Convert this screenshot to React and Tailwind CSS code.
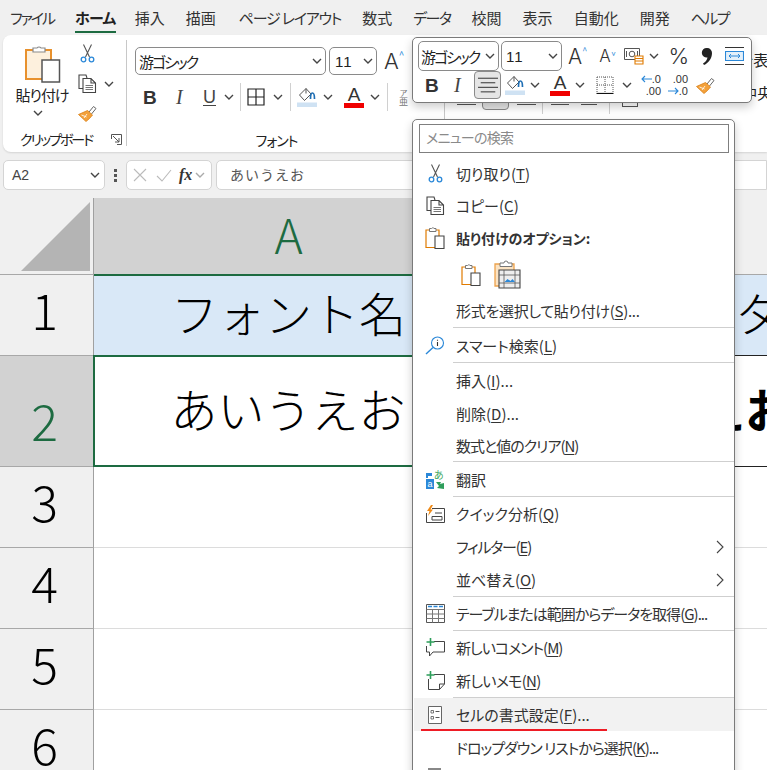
import React from 'react';

const TABS = [
  ["ファイル", "tracking-[-2px]"], ["ホーム", "tracking-[-0.7px] -mr-[2px]"], ["挿入", ""], ["描画", "mr-[2px]"],
  ["ページ レイアウト", "tracking-[-1.2px]"], ["数式", ""], ["データ", "tracking-[-1.500px]"], ["校閲", ""],
  ["表示", ""], ["自動化", ""], ["開発", ""], ["ヘルプ", "tracking-[-1.600px]"],
];
const ROW_GREEN = "#1d6b41";

const Chev = ({ className = "", color = "#444" }) => (
  <svg width="10" height="6" viewBox="0 0 10 6" className={"shrink-0 " + className}>
    <path d="M1 1l4 4 4-4" fill="none" stroke={color} strokeWidth="1.4" />
  </svg>
);

const CutIcon = ({ w = 15, h = 19 }) => (
  <svg width={w} height={h} viewBox="0 0 15 19">
    <path d="M3.5 0.5L9.5 13M11.5 0.5L5.5 13" fill="none" stroke="#555" strokeWidth="1.1" />
    <circle cx="3.5" cy="15.5" r="2.3" fill="none" stroke="#2b88d8" strokeWidth="1.3" />
    <circle cx="11.5" cy="15.5" r="2.3" fill="none" stroke="#2b88d8" strokeWidth="1.3" />
  </svg>
);

const CopyIcon = () => (
  <svg width="19" height="19" viewBox="0 0 19 19">
    <path d="M5 14.5H1V1h7l1 3" fill="none" stroke="#444" strokeWidth="1.1" />
    <path d="M5 4.5h8l4.5 4.5v9.500H5z M13 4.500V9h4.500" fill="#fff" stroke="#444" strokeWidth="1.1" />
    <path d="M7.500 11.500h7.500M7.500 13.500h7.500M7.500 15.500h7.500" stroke="#666" strokeWidth="0.9" />
  </svg>
);

const PasteBig = () => (
  <svg width="36" height="39" viewBox="0 0 36 39">
    <path d="M1 6h25v29H1z" fill="#fdf0dd" stroke="#e8912d" strokeWidth="2" />
    <path d="M8 8V4h4a2.500 2.500 0 0 1 4 0h4v4z" fill="#fff" stroke="#8a8a8a" strokeWidth="1.2" />
    <path d="M17 16h17.500v22H17z" fill="#fff" stroke="#555" strokeWidth="1.500" />
  </svg>
);

const PasteSmall = () => (
  <svg width="20" height="24" viewBox="0 0 20 24">
    <path d="M1 4h13v17.500H1z" fill="#fff" stroke="#e07b00" strokeWidth="1.200" />
    <path d="M4.500 5.500V2.500h2a1.500 1.500 0 0 1 2.500 0h2v3z" fill="#fff" stroke="#777" strokeWidth="1" />
    <path d="M10 10h9v12.500h-9z" fill="#fff" stroke="#444" strokeWidth="1.100" />
  </svg>
);

const PastePic = () => (
  <svg width="27" height="29" viewBox="0 0 27 29">
    <path d="M1 4h19v22H1z" fill="#fbe3c3" stroke="#eda24c" strokeWidth="1.300" />
    <path d="M6 6.500V3h4a2 2 0 0 1 4 0h4v3.500z" fill="#fff" stroke="#777" strokeWidth="1" />
    <path d="M5 10h21v18H5z" fill="#eee" stroke="#444" strokeWidth="1.100" />
    <path d="M5 15h21M5 23h21M10 10v18M21 10v18" stroke="#555" strokeWidth="0.800" />
    <path d="M10.500 22l3-3 3 2 2-2 2.500 3z" fill="#2b88d8" />
  </svg>
);

const PainterIcon = ({ w = 20, h = 17 }) => (
  <svg width={w} height={h} viewBox="0 0 20 17">
    <path d="M11 7l4.500-5.500 2.500 2L13.500 9" fill="#fff" stroke="#666" strokeWidth="1" />
    <path d="M9.500 5.500l5 4.500-3 3.500-3.500 3L0.500 9.500z" fill="#f3a13b" stroke="#d97f14" strokeWidth="0.800" />
    <path d="M3.500 10l5 2M6 13l3-4" stroke="#fff" strokeWidth="0.800" />
  </svg>
);

const FillIcon = () => (
  <svg width="20" height="20" viewBox="0 0 20 20">
    <path d="M9 1.500L2.500 8l5 5.500L14 7z" fill="#fff" stroke="#555" strokeWidth="1" />
    <path d="M9 1.500v5" stroke="#555" strokeWidth="1" />
    <path d="M13.500 12c0-4 .5-6 2-6s2 2 2 6" fill="none" stroke="#1f6fb5" strokeWidth="1.700" />
    <rect x="0" y="15.500" width="20" height="4.500" fill="#cfe2f3" />
  </svg>
);

const BordersIcon = () => (
  <svg width="18" height="18" viewBox="0 0 18 18">
    <path d="M1 1h16v16H1zM9 1v16M1 9h16" fill="none" stroke="#222" strokeWidth="1.200" />
  </svg>
);

const DottedBorders = () => (
  <svg width="18" height="18" viewBox="0 0 18 18">
    <path d="M1 1h16v16M1 1v16M9 1v16M1 9h16" fill="none" stroke="#555" strokeWidth="1" strokeDasharray="1 1" />
    <path d="M0.500 17.500h17" stroke="#111" strokeWidth="1.200" />
  </svg>
);

const Launcher = () => (
  <svg width="11" height="11" viewBox="0 0 11 11">
    <path d="M0.500 5V0.500h10v10H6" fill="none" stroke="#555" strokeWidth="1" />
    <path d="M2 2l6 6M8 4v4H4" fill="none" stroke="#555" strokeWidth="1" />
  </svg>
);

const LinesIcon = ({ w = 22 }) => (
  <svg width={w} height="19" viewBox="0 0 22 19">
    <path d="M0 1.500h22M3 6.500h16M0 11.500h22M3 16.500h16" stroke="#333" strokeWidth="1.100" />
  </svg>
);

const NumFmtIcon = () => (
  <svg width="20" height="18" viewBox="0 0 20 18">
    <path d="M0.500 1.500h15v11h-15z" fill="#fff" stroke="#555" strokeWidth="1" />
    <circle cx="8" cy="7" r="2.800" fill="none" stroke="#555" strokeWidth="1" />
    <path d="M2.500 4v6M13.500 4v6" stroke="#555" strokeWidth="1" />
    <path d="M11 9h8v8h-8z" fill="#fff" stroke="#e07b00" strokeWidth="1.100" />
    <path d="M11 11.500h8M11 14h8" stroke="#e07b00" strokeWidth="1" />
  </svg>
);

const CommaIcon = () => (
  <svg width="12" height="19" viewBox="0 0 12 19">
    <path d="M6 1a4.800 4.800 0 0 1 5 5c0 5.500-3.500 10-8 12l-1-1.500c2.500-1.500 4-3.500 4.500-6A4.800 4.800 0 1 1 6 1z" fill="#222" />
  </svg>
);

const WrapIcon = () => (
  <svg width="19" height="18" viewBox="0 0 19 18">
    <path d="M0 0.500h19M0 17.500h19" stroke="#333" strokeWidth="1" />
    <path d="M0.500 4.500h18v9h-18z" fill="#e3f0fa" stroke="#2b88d8" strokeWidth="1.100" />
    <path d="M4 9h11M6 7L4 9l2 2M13 7l2 2-2 2" fill="none" stroke="#2b88d8" strokeWidth="1" />
  </svg>
);

const SearchInfoIcon = () => (
  <svg width="20" height="19" viewBox="0 0 20 19">
    <circle cx="12.500" cy="7" r="6" fill="#fff" stroke="#2b88d8" strokeWidth="1.100" />
    <path d="M8 11.500L1 18" stroke="#2b88d8" strokeWidth="1.400" />
    <path d="M12.500 6v4M12.500 3.800v1" stroke="#333" strokeWidth="1.100" />
  </svg>
);

const TranslateIcon = () => (
  <svg width="19" height="19" viewBox="0 0 19 19">
    <path d="M0 3h6v3H2v2H0z" fill="#2b88d8" />
    <rect x="0" y="9" width="8" height="10" fill="#2b88d8" />
    <text x="1.500" y="17" fontSize="9" fill="#fff" fontFamily="'Liberation Sans',sans-serif">a</text>
    <text x="8" y="9" fontSize="10" fill="#41a85f" fontFamily="'Noto Sans CJK JP',sans-serif">あ</text>
    <path d="M10 12h5l-1 2 4-1v6l-7-1 2-2z" fill="#2e9e5b" />
  </svg>
);

const QuickIcon = () => (
  <svg width="19" height="18" viewBox="0 0 19 18">
    <path d="M6 3.500h12.500v14h-18V8" fill="#fff" stroke="#444" strokeWidth="1" />
    <path d="M6 11.500h10v3.500H6zM9 8h7" fill="none" stroke="#444" strokeWidth="1" />
    <path d="M5 0L1 6h2.500L2 11l5-6.500H4.500L7 0z" fill="#ef8a17" />
  </svg>
);

const TableIcon = () => (
  <svg width="19" height="19" viewBox="0 0 19 19">
    <path d="M0.500 0.500h18v18H0.500z" fill="#fff" stroke="#555" strokeWidth="1" />
    <path d="M0.500 5.500h18M0.500 10h18M0.500 14.500h18M6.500 5v13.500M12.500 5v13.500" stroke="#777" strokeWidth="1" />
    <path d="M2 2.500h4M7.500 2.500h4M13 2.500h4" stroke="#2b88d8" strokeWidth="1.500" />
  </svg>
);

const CommentIcon = () => (
  <svg width="19" height="19" viewBox="0 0 19 19">
    <path d="M8 3.500h10.500V14H7l-3.500 4V14H0.500V8" fill="none" stroke="#444" strokeWidth="1" />
    <path d="M4.500 0v8M0.500 4h8" stroke="#2e9e5b" strokeWidth="1.600" />
  </svg>
);

const MemoIcon = () => (
  <svg width="19" height="19" viewBox="0 0 19 19">
    <path d="M8 3.500h10.500V13l-5 5.500h-11V8" fill="none" stroke="#444" strokeWidth="1" />
    <path d="M18.500 13h-5v5.500" fill="none" stroke="#444" strokeWidth="1" />
    <path d="M4.500 0v8M0.500 4h8" stroke="#2e9e5b" strokeWidth="1.600" />
  </svg>
);

const FormatCellsIcon = () => (
  <svg width="14" height="18" viewBox="0 0 14 18">
    <path d="M0.500 0.500h13v17h-13z" fill="#fff" stroke="#666" strokeWidth="1" />
    <path d="M3 4.500h2.500v2.500H3zM3 10.500h2.500V13H3z" fill="none" stroke="#555" strokeWidth="0.800" />
    <path d="M7.500 5.500h4M7.500 11.500h4" stroke="#555" strokeWidth="1" />
  </svg>
);

const BigA = ({ size = "text-[22px]" }) => <span className={size + " font-['Inter',sans-serif] font-light leading-none text-[#333]"}>A</span>;

const ColorA = () => (
  <div className="flex flex-col items-center w-[20px]">
    <span className="text-[19px] leading-[15px] text-[#333] font-['Liberation_Sans',sans-serif]">A</span>
    <div className="w-[20px] h-[5px] bg-[#f00000] mt-[1px]" />
  </div>
);

const FontSelect = ({ w, children, pad = "pl-[3px] pr-[3px]", h = "h-[28px]" }) => (
  <div className={"shrink-0 flex items-center justify-between rounded-[5px] border border-[#8a8a8a] bg-white " + w + " " + h + " " + pad}>
    <span className="text-[15px] leading-none text-[#222] whitespace-nowrap">{children}</span>
    <Chev />
  </div>
);

const FontName = () => <span className="tracking-[-2px]">游ゴシック</span>;
const SizeValue = () => <span className="font-['Liberation_Sans',sans-serif] tracking-[1px]">11</span>;

function Ribbon() {
  return (
    <div className="h-[117px] ml-[3px] rounded-l-lg bg-white shadow-[0_1px_2px_rgba(0,0,0,0.12)] flex overflow-hidden">
      {/* クリップボード */}
      <div className="w-[123px] shrink-0 flex flex-col">
        <div className="h-[93px] flex">
          <div className="w-[70px] flex flex-col items-center pt-[9px] pl-[10px]">
            <PasteBig />
            <span className="text-[15px] leading-[18px] mt-[3px] -ml-[2px] tracking-[-1px] text-[#222] whitespace-nowrap">貼り付け</span>
            <Chev className="mt-[6px] -ml-[10px]" />
          </div>
          <div className="flex flex-col pl-[5px] pt-[9px]">
            <div className="h-[24px] pl-[2px]"><CutIcon /></div>
            <div className="h-[31px] flex items-center gap-[7px]"><CopyIcon /><Chev /></div>
            <div className="mt-[6px]"><PainterIcon /></div>
          </div>
        </div>
        <div className="flex items-center justify-between pl-[17px] pr-[4px] mt-[1px]">
          <span className="text-[14px] leading-[20px] tracking-[-2px] text-[#222] whitespace-nowrap">クリップボード</span>
          <Launcher />
        </div>
      </div>
      <div className="w-px h-[106px] mt-[5px] bg-[#c8c8c8] shrink-0" />
      {/* フォント */}
      <div className="w-[317px] shrink-0 flex flex-col pl-[8px]">
        <div className="flex items-center gap-[3px] pt-[12px]">
          <FontSelect w="w-[191px]"><FontName /></FontSelect>
          <FontSelect w="w-[48px]" pad="pl-[5px] pr-[3px]"><SizeValue /></FontSelect>
          <div className="ml-[4px] flex items-start"><BigA /><span className="text-[10px] leading-none text-[#2b88d8]">^</span></div>
        </div>
        <div className="flex items-center h-[24px] mt-[10px] pl-[8px]">
          <span className="w-[20px] shrink-0 font-['Liberation_Sans',sans-serif] font-bold text-[19px] text-[#333] leading-none">B</span>
          <span className="w-[28px] shrink-0 ml-[12px] pl-[1px] font-['Liberation_Serif',serif] italic text-[20px] text-[#444] leading-none">I</span>
          <span className="w-[15px] shrink-0 font-['Liberation_Sans',sans-serif] underline underline-offset-2 text-[18px] text-[#444] leading-none">U</span>
          <Chev className="ml-[6px]" />
          <div className="w-px h-[28px] shrink-0 bg-[#d0d0d0] ml-[6px]" />
          <div className="ml-[6px]"><BordersIcon /></div>
          <Chev className="ml-[8px]" />
          <div className="w-px h-[28px] shrink-0 bg-[#d0d0d0] ml-[7px]" />
          <div className="ml-[6px]"><FillIcon /></div>
          <Chev className="ml-[6px]" />
          <div className="ml-[11px]"><ColorA /></div>
          <Chev className="ml-[6px]" />
          <div className="w-px h-[28px] shrink-0 bg-[#d0d0d0] ml-[7px]" />
          <div className="ml-[11px] flex flex-col items-center leading-none text-[#777]">
            <span className="text-[8px] leading-[9px]">ア</span>
            <span className="text-[9px] leading-[10px]">亜</span>
          </div>
        </div>
        <div className="flex-1 flex items-start justify-center pr-[26px] pt-[21px]">
          <span className="text-[14px] leading-[20px] tracking-[-1px] text-[#222]">フォント</span>
        </div>
      </div>
      <div className="w-px h-[106px] mt-[5px] bg-[#c8c8c8] shrink-0" />
      {/* 配置 (ミニツールバーの下) */}
      <div className="flex-1 flex flex-col pt-[15px] pl-[12px] whitespace-nowrap overflow-hidden">
        <div className="pl-[184px] h-[24px] text-[15px] leading-[20px] text-[#222]">折り返して全体を表示する</div>
        <div className="flex items-start mt-[12px] h-[30px]">
          <div className="w-[19px] shrink-0 mt-[18px] h-px bg-[#555]" />
          <div className="w-[27px] shrink-0 h-[28px] ml-[6px] -mt-[4px] rounded-[4px] bg-[#e5e5e5] border border-[#8a8a8a]" />
          <div className="w-[19px] shrink-0 mt-[18px] ml-[8px] h-px bg-[#555]" />
          <div className="w-px h-[28px] shrink-0 bg-[#d0d0d0] ml-[6px]" />
          <div className="w-[18px] shrink-0 mt-[18px] ml-[8px] h-px bg-[#555]" />
          <div className="w-[16px] shrink-0 mt-[18px] ml-[12px] h-px bg-[#555]" />
          <div className="w-px h-[28px] shrink-0 bg-[#d0d0d0] ml-[12px]" />
          <div className="w-[16px] shrink-0 h-[12px] mt-[9px] ml-[12px] border border-[#555]" />
          <span className="ml-[6px] text-[15px] leading-[20px] text-[#222] mt-[-3px]">セルを結合して中央揃え</span>
        </div>
      </div>
    </div>
  );
}

function FormulaBar() {
  return (
    <div className="h-[30px] mt-[8px] ml-[3px] flex items-stretch">
      <div className="w-[102px] flex items-center justify-between pl-[8px] pr-[4px] rounded-[5px] bg-white border border-[#d4d4d4]">
        <span className="font-['Liberation_Sans',sans-serif] text-[14px] text-[#444]">A2</span>
        <Chev />
      </div>
      <div className="w-[21px] flex flex-col items-center justify-center gap-[2px]">
        <div className="w-[3px] h-[3px] bg-[#555]" /><div className="w-[3px] h-[3px] bg-[#555]" /><div className="w-[3px] h-[3px] bg-[#555]" />
      </div>
      <div className="w-[86px] flex items-center pl-[6px] rounded-[5px] bg-white border border-[#d4d4d4]">
        <svg width="14" height="14" viewBox="0 0 14 14"><path d="M1 1l12 12M13 1L1 13" stroke="#bbb" strokeWidth="1.100" /></svg>
        <svg width="16" height="13" viewBox="0 0 16 13" className="ml-[9px]"><path d="M1 7l5 5L15 1" fill="none" stroke="#bbb" strokeWidth="1.100" /></svg>
        <span className="ml-[7px] font-['Liberation_Serif',serif] italic font-bold text-[16px] text-[#333] leading-none">fx</span>
        <Chev className="ml-[3px]" color="#aaa" />
      </div>
      <div className="flex-1 ml-[4px] flex items-center pl-[13px] pb-[2px] rounded-l-[5px] bg-white border border-[#d4d4d4]">
        <span className="text-[14px] tracking-[1px] text-[#555] [font-feature-settings:normal]">あいうえお</span>
      </div>
    </div>
  );
}

const RowHead = ({ n, active, h, last }) => (
  <div className={"w-[94px] shrink-0 flex items-end justify-center pb-[17px] pr-[4px] border-r border-r-[#a0a0a0] " + h + " " + (active ? "bg-[#d2d2d2]" : "bg-[#f0f0f0]") + (last ? "" : " border-b border-b-[#a8a8a8]")}>
    <span className={"text-[50px] leading-[60px] font-light " + (active ? "text-[#1d6b41]" : "text-black")}>{n}</span>
  </div>
);

function Grid() {
  return (
    <div className="mt-[8px] bg-white [font-feature-settings:normal]">
      <div className="flex h-[77px]">
        <div className="w-[94px] shrink-0 bg-[#f0f0f0] border-r border-r-[#a0a0a0] border-b border-b-[#a8a8a8] flex items-end justify-end pr-[3px] pb-[3px]">
          <svg width="69" height="69" viewBox="0 0 69 69"><path d="M0 69L69 0v69z" fill="#b4b4b4" /></svg>
        </div>
        <div className="w-[389px] shrink-0 bg-[#d2d2d2] flex items-center justify-center pb-[8px]">
          <span className="text-[48px] leading-none font-light" style={{ color: ROW_GREEN }}>A</span>
        </div>
        <div className="flex-1 bg-[#f0f0f0] border-b border-b-[#a8a8a8]" />
      </div>
      <div className="flex h-[81px]">
        <RowHead n="1" h="h-[81px]" />
        <div className="w-[389px] shrink-0 bg-[#d9e8f7] -mt-px h-[81px] border-t-2 border-t-[#1d6b41] flex items-center justify-center pb-[8px]">
          <span className="text-[47px] leading-none font-light text-black">フォント名</span>
        </div>
        <div className="flex-1 bg-[#d9e8f7] border-b border-b-[#222] pl-[252px] pb-[8px] flex items-center overflow-hidden">
          <span className="text-[47px] leading-none font-light text-black">タ</span>
        </div>
      </div>
      <div className="flex h-[111px]">
        <RowHead n="2" h="h-[111px]" active />
        <div className="w-[390px] shrink-0 -ml-px border-2 border-[#1d6b41] -mt-px h-[112px] flex items-center justify-center pb-[8px]">
          <span className="text-[47px] leading-none font-light text-black">あいうえお</span>
        </div>
        <div className="flex-1 border-b border-b-[#222] pl-[215px] pb-[8px] flex items-center overflow-hidden whitespace-nowrap">
          <span className="text-[47px] leading-none font-bold text-black">えお</span>
        </div>
      </div>
      {["3", "4", "5", "6"].map((n) => (
        <div key={n} className="flex h-[81px]">
          <RowHead n={n} h="h-[81px]" />
          <div className="flex-1 border-b border-b-[#dcdcdc]" />
        </div>
      ))}
    </div>
  );
}

const Dec = ({ top, bottom, arrowTop }) => (
  <div className="w-[22px] flex flex-col font-['Liberation_Sans',sans-serif] text-[11px] leading-[11px] text-[#333]">
    <div className="flex items-center justify-end h-[11px]">
      {arrowTop && <svg width="11" height="8" viewBox="0 0 11 8"><path d="M11 4H1M4 1L1 4l3 3" fill="none" stroke="#2b88d8" strokeWidth="1.100" /></svg>}
      <span>{top}</span>
    </div>
    <div className="flex items-center justify-end h-[11px] mt-[1px]">
      {!arrowTop && <svg width="11" height="8" viewBox="0 0 11 8"><path d="M0 4h10M7 1l3 3-3 3" fill="none" stroke="#2b88d8" strokeWidth="1.100" /></svg>}
      <span>{bottom}</span>
    </div>
  </div>
);

function MiniToolbar() {
  return (
    <div className="absolute left-[412px] top-[37px] w-[340px] h-[66px] rounded-[5px] border border-[#7a7a7a] bg-white shadow-[0_4px_10px_rgba(0,0,0,0.2)] pl-[5px] pt-[3px]">
      <div className="flex items-center h-[30px]">
        <FontSelect w="w-[81px]" h="h-[30px]" pad="pl-[2px] pr-[3px]"><FontName /></FontSelect>
        <div className="w-[2px]" />
        <FontSelect w="w-[61px]" h="h-[30px]" pad="pl-[4px] pr-[3px]"><SizeValue /></FontSelect>
        <div className="ml-[6px] flex items-start"><BigA size="text-[21px]" /><span className="text-[9px] leading-none text-[#2b88d8]">^</span></div>
        <div className="ml-[12px] flex items-start"><BigA size="text-[17px]" /><span className="text-[9px] leading-none text-[#2b88d8] rotate-180">^</span></div>
        <div className="ml-[8px]"><NumFmtIcon /></div>
        <Chev className="ml-[5px]" />
        <span className="ml-[10px] font-['Inter',sans-serif] font-light text-[22px] leading-none text-[#333]">%</span>
        <div className="ml-[12px]"><CommaIcon /></div>
        <div className="ml-[12px]"><WrapIcon /></div>
      </div>
      <div className="flex items-center h-[28px]">
        <span className="ml-[7px] w-[18px] shrink-0 font-['Liberation_Sans',sans-serif] font-bold text-[19px] text-[#333] leading-none">B</span>
        <span className="ml-[11px] w-[17px] shrink-0 font-['Liberation_Serif',serif] italic text-[20px] text-[#444] leading-none">I</span>
        <div className="ml-[3px] w-[27px] h-[28px] shrink-0 rounded-[4px] bg-[#e5e5e5] border border-[#8a8a8a] flex items-center justify-center"><LinesIcon w={20} /></div>
        <div className="ml-[4px]"><FillIcon /></div>
        <Chev className="ml-[5px]" />
        <div className="ml-[10px]"><ColorA /></div>
        <Chev className="ml-[5px]" />
        <div className="ml-[11px]"><DottedBorders /></div>
        <Chev className="ml-[8px]" />
        <div className="ml-[7px]"><Dec top=".0" bottom=".00" arrowTop /></div>
        <div className="ml-[5px]"><Dec top=".00" bottom=".0" /></div>
        <div className="ml-[8px]"><PainterIcon /></div>
      </div>
    </div>
  );
}

const Sep = () => <div className="ml-[39px] h-px bg-[#cfcfcf]" />;

// k は下線付きのアクセスキー、tail は閉じ括弧以降
const Item = ({ h = "h-[33px]", icon, label, k, tail = "", arrow, hover, tr = "" }) => (
  <div className={"flex items-center " + h + (hover ? " bg-[#f2f2f2]" : "")}>
    <div className="w-[42px] shrink-0 flex items-center justify-center">{icon}</div>
    <span className={"text-[15px] leading-none text-[#333] whitespace-nowrap " + tr}>
      {label}
      {k && <>(<span className="underline underline-offset-2">{k}</span>){tail}</>}
    </span>
    {arrow && (
      <svg width="8" height="14" viewBox="0 0 8 14" className="ml-auto mr-[10px]"><path d="M1 1l6 6-6 6" fill="none" stroke="#444" strokeWidth="1.100" /></svg>
    )}
  </div>
);

function ContextMenu() {
  return (
    <div className="absolute left-[412px] top-[119px] w-[323px] h-[660px] rounded-[5px] border border-[#7a7a7a] bg-white shadow-[0_4px_10px_rgba(0,0,0,0.2)] pl-[1px]">
      <div className="mx-[5px] mt-[4px] h-[29px] border border-[#7f7f7f] flex items-center pl-[6px] pb-[2px] text-[14px] tracking-[-0.700px] text-[#8a8a8a]">メニューの検索</div>
      <div className="h-[4px]" />
      <Item h="h-[32px]" icon={<CutIcon />} label="切り取り" k="T" />
      <Item h="h-[32px]" icon={<CopyIcon />} label="コピー" k="C" />
      <div className="h-[34px] flex items-center">
        <div className="w-[42px] flex justify-center"><PasteSmall /></div>
        <span className="text-[14px] font-bold text-[#333] whitespace-nowrap">貼り付けのオプション:</span>
      </div>
      <div className="h-[39px] flex items-center gap-[13px] pl-[47px]">
        <PasteSmall />
        <PastePic />
      </div>
      <Item label="形式を選択して貼り付け" k="S" tail="..." tr="tracking-[-0.300px]" />
      <Sep />
      <Item h="h-[34px]" icon={<SearchInfoIcon />} label="スマート検索" k="L" />
      <Sep />
      <Item h="h-[34px]" label="挿入" k="I" tail="..." />
      <Item h="h-[32px]" label="削除" k="D" tail="..." />
      <Item h="h-[32px]" label="数式と値のクリア" k="N" tr="tracking-[-1px]" />
      <Sep />
      <Item h="h-[34px]" icon={<TranslateIcon />} label="翻訳" />
      <Sep />
      <Item icon={<QuickIcon />} label="クイック分析" k="Q" />
      <Item label="フィルター" k="E" arrow tr="tracking-[-1.200px]" />
      <Item label="並べ替え" k="O" arrow />
      <Sep />
      <Item icon={<TableIcon />} label="テーブルまたは範囲からデータを取得" k="G" tail="..." tr="tracking-[-1px]" />
      <Sep />
      <Item icon={<CommentIcon />} label="新しいコメント" k="M" tr="tracking-[-1px]" />
      <Item icon={<MemoIcon />} label="新しいメモ" k="N" tr="tracking-[-0.700px]" />
      <Sep />
      <Item icon={<FormatCellsIcon />} label="セルの書式設定" k="F" tail="..." hover />
      <Item label="ドロップダウン リストから選択" k="K" tail="..." tr="tracking-[-1px]" />
      <div className="ml-[14px] mt-[4px] w-[13px] h-[10px] bg-[#888]" />
      {/* 赤い下線の注記 */}
      <div className="absolute left-[8px] top-[609px] w-[186px] h-[2px] bg-[#ee1c25]" />
    </div>
  );
}

export default function App() {
  return (
    <div className="relative w-[767px] h-[770px] overflow-hidden bg-[#f0f0f0] font-['Noto_Sans_CJK_JP',sans-serif] [font-feature-settings:'palt']">
      <div className="h-[35px] flex items-center gap-[21px] pl-[10px] whitespace-nowrap">
        {TABS.map(([t, tr]) => (
          <div key={t} className={"relative text-[15px] leading-[20px] h-[30px] flex items-center " + tr + " " + (t === "ホーム" ? "font-bold text-[#222]" : "text-[#333]")}>
            {t}
            {t === "ホーム" && <div className="absolute left-0 right-0 bottom-0 h-[2px] bg-[#1d6b41]" />}
          </div>
        ))}
      </div>
      <Ribbon />
      <FormulaBar />
      <Grid />
      <MiniToolbar />
      <ContextMenu />
    </div>
  );
}
